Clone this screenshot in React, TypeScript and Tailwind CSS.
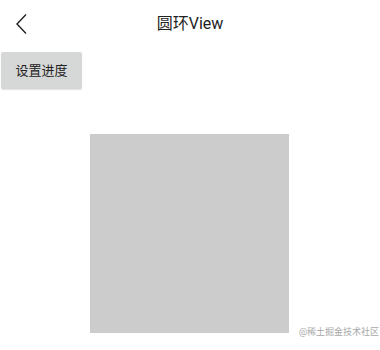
export default function App() {
  return (
    <div
      className="relative h-[350px] w-[380px] overflow-hidden bg-white text-[#222]"
      style={{ fontFamily: 'Roboto, "Noto Sans CJK SC", sans-serif' }}
    >
      {/* Toolbar */}
      <div className="relative flex h-12 items-center justify-center">
        <svg
          className="absolute left-[14px] top-[13px]"
          width="16"
          height="22"
          viewBox="0 0 16 22"
          fill="none"
          stroke="#222"
          strokeWidth="1.4"
        >
          <path d="M12 1.5 L3 11 L12 20.5" />
        </svg>
        <span className="text-base leading-none">圆环View</span>
      </div>

      <button className="ml-[1px] mt-[4px] flex h-[37px] w-[81px] items-center justify-center rounded-[2px] bg-[#d6d7d7] text-[13px] text-[#222] shadow-[0_1px_1px_rgba(0,0,0,0.12)]">
        设置进度
      </button>

      <div className="ml-[90px] mt-[45px] h-[199px] w-[199px] bg-[#cccccc]" />

      <span className="absolute left-[299px] top-[328px] text-[9px] leading-none text-[#a8a8a8]">
        @稀土掘金技术社区
      </span>
    </div>
  )
}
